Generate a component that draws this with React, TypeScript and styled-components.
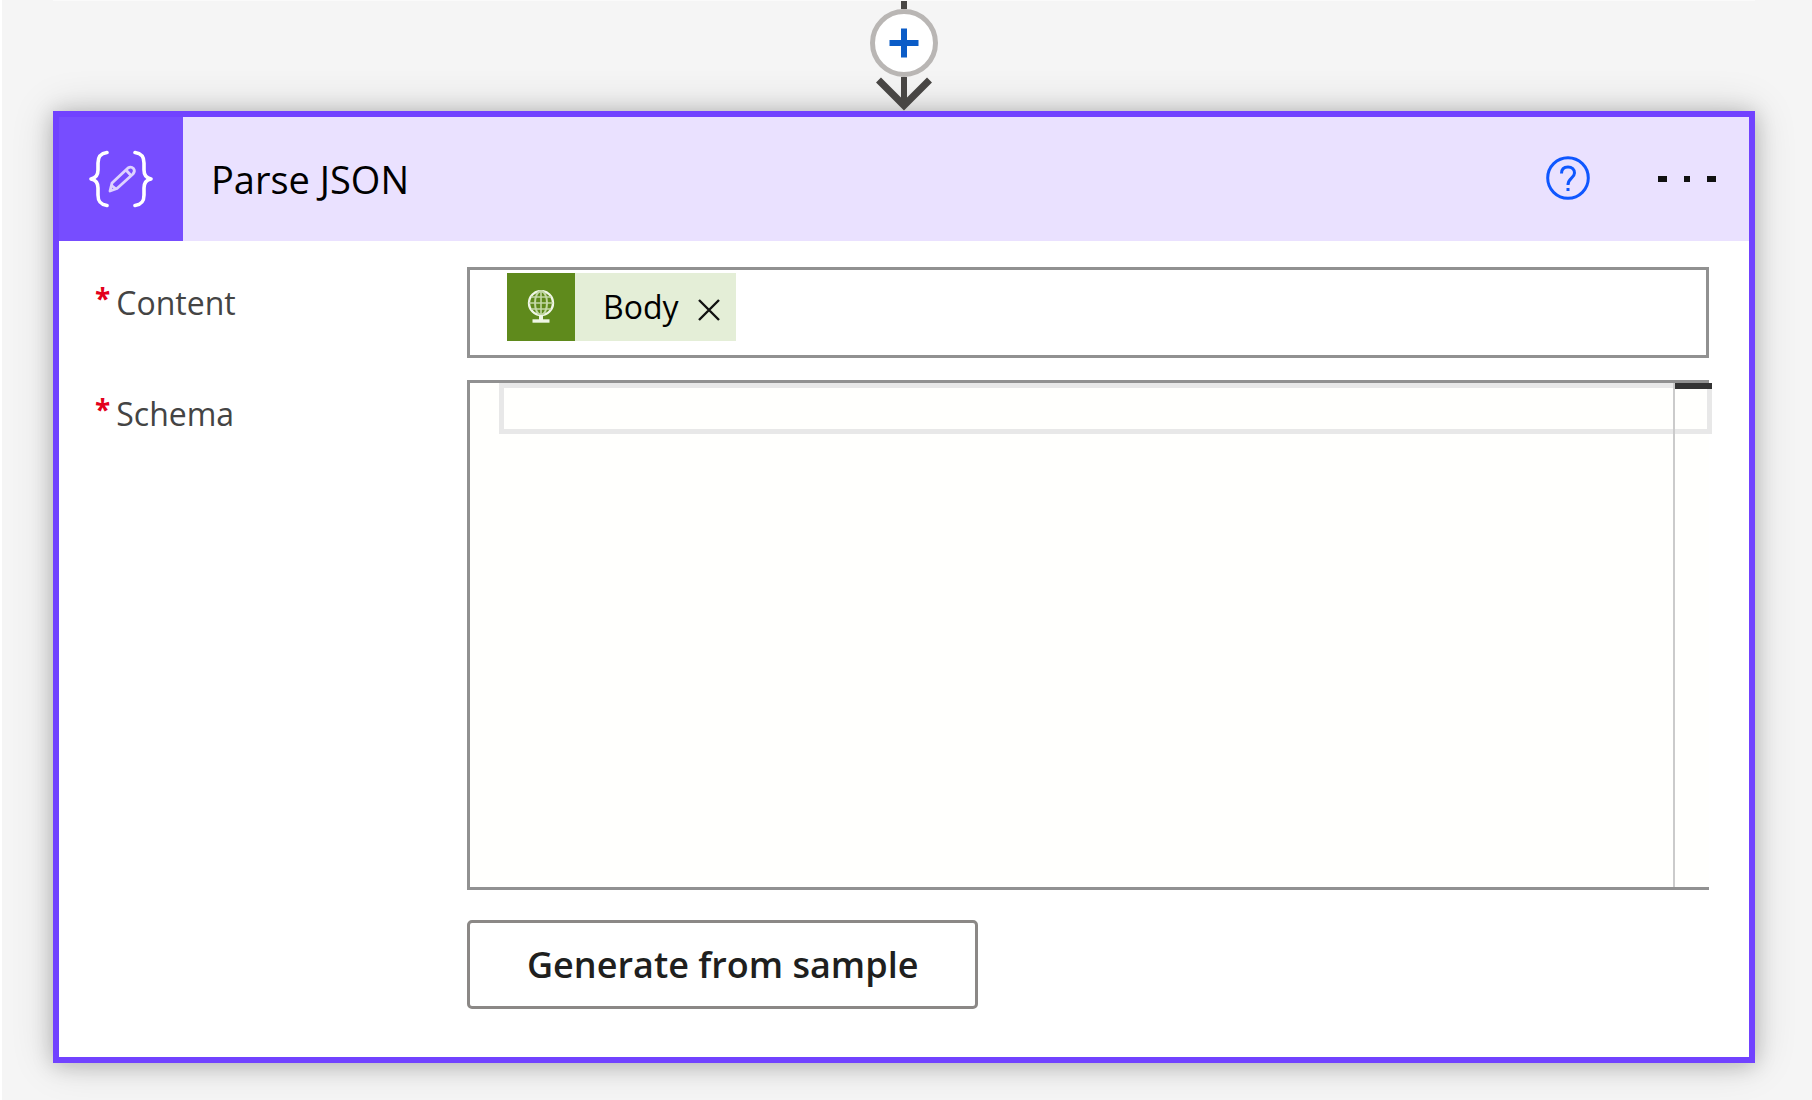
import React from "react";
import styled, { createGlobalStyle } from "styled-components";

const GlobalStyle = createGlobalStyle`
  *, *::before, *::after { box-sizing: border-box; }
  body {
    margin: 0;
    background: #f5f5f5;
    font-family: "Open Sans", "Noto Sans", sans-serif;
  }
  button { font-family: inherit; cursor: pointer; }
`;

const Canvas = styled.main`
  min-height: 100vh;
  padding: 0 57px 36px 51px;
  border-left: 2px solid #ffffff;
`;

const Connector = styled.div`
  display: flex;
  flex-direction: column;
  align-items: center;
  height: 111px;
  border-top: 1px solid #fafafa;
`;

const Stem = styled.span`
  width: 6px;
  height: 8px;
  background: #484644;
`;

const AddButton = styled.button`
  display: grid;
  place-items: center;
  flex: none;
  width: 68px;
  height: 68px;
  padding: 0;
  border: 5px solid #b9b6b4;
  border-radius: 50%;
  background: #ffffff;
`;

const ArrowHead = styled.svg`
  display: block;
  flex: none;
`;

const Card = styled.section`
  border: 6px solid #7142ff;
  background: #ffffff;
  box-shadow: 0 0 40px rgba(0, 0, 0, 0.16), 0 2px 20px rgba(0, 0, 0, 0.2);
`;

const Header = styled.header`
  display: flex;
  align-items: center;
  height: 124px;
  background: #eae1ff;
`;

const IconTile = styled.div`
  display: flex;
  align-items: center;
  justify-content: flex-end;
  width: 124px;
  height: 100%;
  padding-right: 30px;
  background: #774dff;
`;

const Title = styled.h1`
  flex: 1;
  margin: 0;
  padding-left: 28px;
  color: #000000;
  font-size: 38px;
  font-weight: 400;
  line-height: 48px;
`;

const HeaderActions = styled.div`
  display: flex;
  align-items: center;
  gap: 68px;
  padding-right: 33px;
`;

const IconButton = styled.button`
  display: grid;
  place-items: center;
  padding: 0;
  border: 0;
  background: transparent;
`;

const Form = styled.form`
  display: flex;
  flex-direction: column;
  gap: 22px;
  padding: 26px 40px 48px 36px;
`;

const Field = styled.div`
  display: grid;
  grid-template-columns: 372px minmax(0, 1fr);
`;

const Label = styled.label<{ $top: number }>`
  display: flex;
  align-items: flex-start;
  gap: 6px;
  padding-top: ${({ $top }) => $top}px;
  color: #444444;
  font-size: 32px;
  line-height: 44px;
`;

const Required = styled.span`
  color: #e3001b;
  font-size: 28px;
  font-weight: 700;
  line-height: 34px;
`;

const TokenBox = styled.div`
  display: flex;
  align-items: flex-start;
  height: 91px;
  padding: 3px 37px;
  border: 3px solid #919191;
`;

const Token = styled.span`
  display: flex;
  align-items: center;
  height: 68px;
  padding-right: 16px;
  background: #e4eed7;
`;

const TokenIcon = styled.span`
  display: grid;
  place-items: center;
  width: 68px;
  height: 68px;
  background: #5f8a1c;
`;

const TokenName = styled.span`
  padding: 0 19px 0 28px;
  color: #000000;
  font-size: 32px;
  line-height: 44px;
`;

const RemoveButton = styled(IconButton)`
  padding-top: 6px;
`;

const Stack = styled.div`
  display: flex;
  flex-direction: column;
  align-items: flex-start;
  gap: 30px;
`;

const Editor = styled.div`
  position: relative;
  width: 100%;
  height: 510px;
  border: 3px solid #919191;
  border-right: 0;
  background: #fffffd;
`;

const EditorInput = styled.textarea`
  display: block;
  width: 100%;
  height: 100%;
  padding: 6px 44px 6px 36px;
  border: 0;
  outline: 0;
  resize: none;
  background: transparent;
  color: #1e1e1e;
  font: 28px/40px "Liberation Mono", monospace;
`;

const CurrentLine = styled.span`
  position: absolute;
  top: 0;
  left: 29px;
  right: -3px;
  height: 51px;
  border: 5px solid #e8e8e8;
  pointer-events: none;
`;

const Ruler = styled.span`
  position: absolute;
  top: 0;
  right: -3px;
  bottom: 0;
  width: 39px;
  border-left: 2px solid #cbcbcb;
  pointer-events: none;

  &::before {
    content: "";
    display: block;
    height: 6px;
    background: #333333;
  }
`;

const SampleButton = styled.button`
  height: 89px;
  padding: 0 57px;
  border: 3px solid #8b8886;
  border-radius: 5px;
  background: #ffffff;
  color: #201f1e;
  font-size: 36px;
  font-weight: 600;
  line-height: 48px;
`;

const PlusIcon = () => (
  <svg width="30" height="30" viewBox="0 0 30 30" aria-hidden="true">
    <path d="M15 0.5V29.5M0.5 15H29.5" stroke="#0b5cc7" strokeWidth="6" />
  </svg>
);

const BracesIcon = () => (
  <svg width="64" height="58" viewBox="0 0 64 58" fill="none" stroke="#ffffff" aria-hidden="true">
    <g strokeWidth="3.6" strokeLinecap="round" strokeLinejoin="round">
      <path d="M18 2.5C11 3.5 9 7 9 13V20C9 25 7 28 2 29C7 30 9 33 9 38V45C9 51 11 54.5 18 55.5" />
      <path d="M46 2.5C53 3.5 55 7 55 13V20C55 25 57 28 62 29C57 30 55 33 55 38V45C55 51 53 54.5 46 55.5" />
    </g>
    <g stroke="#ded3ff" strokeWidth="2.8" strokeLinejoin="round">
      <path d="M21 41L23 33L39 18Q42 16 44.500 18.500Q46.500 21 44 24L28 38.500Z" />
      <path d="M37 20L42 25.500M22 35L27 39" />
    </g>
  </svg>
);

const HelpIcon = () => (
  <svg width="44" height="46" viewBox="0 0 44 46" fill="none" stroke="#0f57ff" aria-hidden="true">
    <circle cx="22" cy="22" r="20.3" strokeWidth="3" />
    <path d="M15.500 17.500C15.500 13 18 11 22 11C26 11 28.500 13.500 28.500 17C28.500 22 22 22 22 29" strokeWidth="3" />
    <path d="M20.500 33.500H23.500" strokeWidth="3" />
  </svg>
);

const MoreIcon = () => (
  <svg width="58" height="6" viewBox="0 0 58 6" fill="#111111" aria-hidden="true">
    <rect x="0" width="9" height="6" />
    <rect x="26" width="6" height="6" />
    <rect x="49" width="9" height="6" />
  </svg>
);

const GlobeIcon = () => (
  <svg width="28" height="34" viewBox="0 0 28 34" fill="none" stroke="#f0f6e6" strokeWidth="2" aria-hidden="true">
    <circle cx="14" cy="13" r="12" strokeWidth="2.400" />
    <ellipse cx="14" cy="13" rx="6" ry="12" stroke="#c3d8a5" />
    <path d="M14 1V25M2 13H26M4 7H24M4 19H24" stroke="#c3d8a5" strokeWidth="1.600" />
    <path d="M14 25V31" strokeWidth="4" />
    <path d="M5.500 31H22.500" strokeWidth="3.400" />
  </svg>
);

const CloseIcon = () => (
  <svg width="22" height="22" viewBox="0 0 22 22" aria-hidden="true">
    <path d="M1 1L21 21M21 1L1 21" stroke="#111111" strokeWidth="2.400" />
  </svg>
);

export default function App() {
  return (
    <>
      <GlobalStyle />
      <Canvas>
        <Connector>
          <Stem />
          <AddButton type="button" aria-label="Insert a new step">
            <PlusIcon />
          </AddButton>
          <ArrowHead width="58" height="34" viewBox="0 0 58 34" fill="none" stroke="#484644" aria-hidden="true">
            <path d="M29 0V28" strokeWidth="6" />
            <path d="M3.500 3L29 28.500L54.500 3" strokeWidth="7" />
          </ArrowHead>
        </Connector>
        <Card aria-labelledby="card-title">
          <Header>
            <IconTile>
              <BracesIcon />
            </IconTile>
            <Title id="card-title">Parse JSON</Title>
            <HeaderActions>
              <IconButton type="button" aria-label="Help">
                <HelpIcon />
              </IconButton>
              <IconButton type="button" aria-label="More commands">
                <MoreIcon />
              </IconButton>
            </HeaderActions>
          </Header>
          <Form onSubmit={(event) => event.preventDefault()}>
            <Field>
              <Label as="div" id="content-label" $top={14}>
                <Required>*</Required>Content
              </Label>
              <TokenBox role="group" aria-labelledby="content-label">
                <Token>
                  <TokenIcon>
                    <GlobeIcon />
                  </TokenIcon>
                  <TokenName>Body</TokenName>
                  <RemoveButton type="button" aria-label="Remove Body">
                    <CloseIcon />
                  </RemoveButton>
                </Token>
              </TokenBox>
            </Field>
            <Field>
              <Label htmlFor="schema" $top={12}>
                <Required>*</Required>Schema
              </Label>
              <Stack>
                <Editor>
                  <CurrentLine />
                  <EditorInput id="schema" spellCheck={false} />
                  <Ruler />
                </Editor>
                <SampleButton type="button">Generate from sample</SampleButton>
              </Stack>
            </Field>
          </Form>
        </Card>
      </Canvas>
    </>
  );
}
